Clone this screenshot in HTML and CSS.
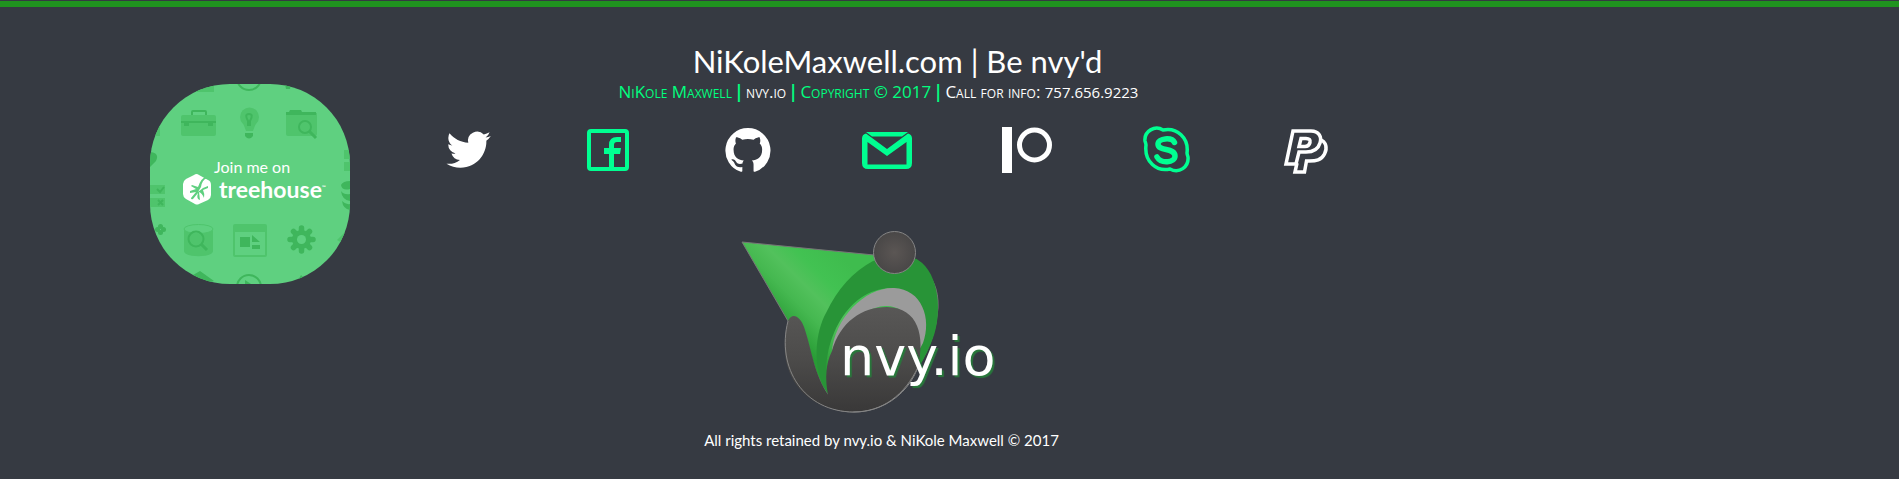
FILE: index.html
```html
<!DOCTYPE html>
<html lang="en">
<head>
<meta charset="utf-8">
<title>NiKoleMaxwell.com</title>
<link rel="stylesheet" href="styles.css">
</head>
<body>
<footer class="footer">
  <a class="badge" href="#" aria-label="Join me on treehouse">
    <svg class="badge-art" viewBox="0 0 200 200" aria-hidden="true">
      <g fill="#4fc46c">
        <rect x="31" y="31" width="35" height="21" rx="2"/>
        <circle cx="99.500" cy="33" r="9.500"/><path d="M93 39h13l-3 8h-7z"/>
        <path d="M136 29h31v21a2 2 0 0 1-2 2h-27a2 2 0 0 1-2-2z"/>
        <path d="M34 145v22c0 7 29 7 29 0v-22z"/>
        <path fill-rule="evenodd" d="M85 140h30a2 2 0 0 1 2 2v29a2 2 0 0 1-2 2H85a2 2 0 0 1-2-2v-29a2 2 0 0 1 2-2zm0 8v23h30v-23z"/>
        <path d="M0 101h15v9H0zM0 114h15v9H0zM194 66h6v9h-6zM194 78h6v9h-6zM187 156l8-8 5 3v13zM46 2h18v6H46zM0 42h10v10H0z"/>
      </g>
      <ellipse cx="48.500" cy="145" rx="14.500" ry="4.500" fill="#5fd080" stroke="#4fc46c"/>
      <g fill="none" stroke="#3fb65c" stroke-width="2">
        <path d="M42 31v-3q0-1 1-1h12q1 0 1 1v3M31 38h35"/>
        <path d="M98 42v-5q-4-7 1-7t1 7v5"/>
        <circle cx="155" cy="43" r="6"/><path d="M159 47l7 7" stroke-width="3"/>
        <circle cx="46" cy="155" r="7.500"/><path d="M51 160l6 6" stroke-width="3"/>
        <circle cx="99" cy="203" r="12"/><circle cx="99" cy="-6" r="12"/>
        <path d="M7 105l3 3 4-5M8 116l5 5m0-5l-5 5"/>
      </g>
      <g fill="#3fb65c">
        <path d="M34 37h5v5h-5zM58 37h5v5h-5zM95 49h8v3q-4 5-8 0zM136 31v-3h3l1-2h11l1 2h14v3z"/>
        <path d="M90 153h10v10H90zM102 151l8 7h-8zM102 161h8v4h-8z"/>
        <path d="M43 191l7-4 14 10-10 3zM95 196l9 6H95zM0 68q10 1 6 9l-6 6zM147 198l4-7 4 4-1 5zM135 0h6l-1 5h-4z"/>
        <circle cx="10.500" cy="142.500" r="2.500"/><circle cx="10.500" cy="148.500" r="2.500"/><circle cx="7.500" cy="145.500" r="2.500"/><circle cx="13.500" cy="145.500" r="2.500"/>
        <path d="M191 101q2-4 9-4v8q-8 2-9-4zM191 107q3 4 9 3v7q-8-1-9-10zM192 117q4 4 8 3v6q-7-1-8-9z"/>
      </g>
      <g transform="translate(151.500 155.500)">
        <g stroke="#3fb65c" stroke-width="5.500" stroke-linecap="round">
          <path d="M0-11.500V11.500M-11.500 0H11.500M-8-8L8 8M-8 8L8-8"/>
        </g>
        <circle r="9.500" fill="#3fb65c"/><circle r="4.500" fill="#5fd080"/>
      </g>
      <path d="M44 91q2.500-2 5 0l9 5q3 1 3 5v10q0 3-3 5l-9 4q-2 1-4 0l-9-5q-3-2-3-5v-10q0-3 3-5z" fill="#fff"/>
      <path d="M57 94q-5 2-6 9l-3 5 5-4 5-2v2l-5 2q2 4 1 8-2-5-5-6l1 8q-4-1-2-7l-5 6q-2 1-2-1l5-6-6 1v-2l6-2-5-3 1-1 6 2q3-9 9-11z" fill="#5fd080"/>
    </svg>
    <span class="badge-join">Join me on</span>
    <span class="badge-name">treehouse<sup class="badge-tm">™</sup></span>
  </a>

  <div class="main">
    <h1 class="title">NiKoleMaxwell.com | Be nvy'd</h1>
    <p class="info">NiKole Maxwell <b>|</b> <a href="#">nvy.io</a> <b>|</b> Copyright © 2017 <b>|</b> <a href="#">Call for info: <span class="phone">757.656.9223</span></a></p>

    <nav class="social" aria-label="Social links">
      <a href="#" aria-label="Twitter"><svg viewBox="0 0 50 50"><path fill="#fff" transform="translate(2.500 2.500) scale(1.850)" d="M23.950 4.570a10 10 0 0 1-2.820.77 4.960 4.960 0 0 0 2.160-2.720c-.95.550-2 .95-3.130 1.180a4.920 4.920 0 0 0-8.380 4.480C7.690 8.090 4.070 6.130 1.640 3.160a4.800 4.800 0 0 0-.67 2.480c0 1.710.87 3.210 2.190 4.100a4.900 4.900 0 0 1-2.230-.62v.06a4.920 4.920 0 0 0 3.950 4.830 5 5 0 0 1-2.210.08 4.940 4.940 0 0 0 4.600 3.420A9.870 9.870 0 0 1 0 19.540a14 14 0 0 0 7.550 2.210c9.050 0 14-7.500 14-13.980 0-.21 0-.42-.02-.63a9.940 9.940 0 0 0 2.420-2.570z"/></svg></a>
      <a href="#" aria-label="Facebook"><svg viewBox="0 0 50 50"><rect x="6" y="6" width="38" height="38" rx="2" fill="none" stroke="#00ff91" stroke-width="4"/><path fill="#00ff91" d="M26 43V29h-5v-6h5v-3q0-8 8-8h4v5h-4q-3 0-3 3v3h7l-1 6h-6v14z"/></svg></a>
      <a href="#" aria-label="GitHub"><svg viewBox="0 0 50 50"><path fill="#fff" transform="translate(2.500 2.500) scale(1.870)" d="M12 .3a12 12 0 0 0-3.800 23.400c.6.100.8-.3.800-.6v-2c-3.300.7-4-1.600-4-1.600-.6-1.400-1.400-1.800-1.400-1.800-1-.7.100-.7.100-.7 1.200 0 1.900 1.200 1.900 1.200 1 1.800 2.800 1.300 3.500 1 0-.8.400-1.300.7-1.600-2.700-.3-5.500-1.300-5.500-6 0-1.200.5-2.300 1.300-3.100-.2-.4-.6-1.600 0-3.200 0 0 1-.3 3.400 1.200a11.500 11.500 0 0 1 6 0c2.300-1.500 3.300-1.200 3.300-1.200.6 1.600.2 2.800 0 3.200.9.800 1.300 1.900 1.300 3.200 0 4.600-2.800 5.600-5.500 5.900.5.400.9 1 .9 2.200v3.300c0 .3.100.7.800.6A12 12 0 0 0 12 .3"/></svg></a>
      <a href="#" aria-label="Email"><svg viewBox="0 0 50 50"><path fill="#00ff91" fill-rule="evenodd" d="M4 8.500L25 24 46 8.500q4 1 4 5V38q0 6-6 6H6q-6 0-6-6V13.500q0-4 4-5zM5.500 17v22.500h39V17L25 31z"/><path fill="#00ff91" d="M4 7h42l-6 4.500H10z"/></svg></a>
      <a href="#" aria-label="Patreon"><svg viewBox="0 0 50 50"><path fill="#fff" d="M0 2h10v46H0z"/><circle cx="32.500" cy="20" r="15" fill="none" stroke="#fff" stroke-width="5"/></svg></a>
      <a href="#" aria-label="Skype"><svg viewBox="0 0 50 50"><g fill="none" stroke="#00ff91"><path stroke-width="3.500" d="M21 5C13 0 2 6 3 16q1 3 1 4C2 37 15 47 28 44c9 5 19-2 18-12q-1-3-1-4C47 13 35 2 21 5z"/><path stroke-width="5.500" stroke-linecap="round" d="M32.500 17.500C30 12 16 13 16 19c0 8 17 3 17 12 0 7-14 8-18 1"/></g></svg></a>
      <a href="#" aria-label="PayPal"><svg viewBox="0 0 50 50"><g fill="none" stroke="#fff" stroke-width="3.500"><path d="M12 6h18c8 0 11 6 9 12-2 7-8 9-14 9h-7l-3 12H5z"/><path d="M20 13.500h5q5 0 4 4-1 4-5 4h-6z"/><path d="M38.500 14c7 3 8 9 5 15-3 6-8 7.500-18 7l-2 11H14l2-9"/></g></svg></a>
    </nav>

    <a class="logo" href="#" aria-label="nvy.io">
      <svg viewBox="0 0 280 200">
        <defs>
          <linearGradient id="cone" gradientUnits="userSpaceOnUse" x1="40" y1="95" x2="105" y2="30"><stop offset="0" stop-color="#289c35"/><stop offset=".3" stop-color="#45b850"/><stop offset=".5" stop-color="#52c15c"/><stop offset=".7" stop-color="#42c252"/><stop offset="1" stop-color="#3fbc4e"/></linearGradient>
          <linearGradient id="ball" gradientUnits="userSpaceOnUse" x1="0" y1="80" x2="0" y2="192"><stop offset="0" stop-color="#5a5958"/><stop offset=".5" stop-color="#4d4c4b"/><stop offset="1" stop-color="#393838"/></linearGradient>
          <radialGradient id="head"><stop offset="0" stop-color="#5b5654"/><stop offset="1" stop-color="#494747"/></radialGradient>
        </defs>
        <circle cx="124" cy="124" r="68" fill="url(#ball)" stroke="#888"/>
        <path d="M12 22L144 35C180 32 210 50 208 88q-2 31-20 59L100 150 98 175Q86 160 76 116L58 101z" fill="url(#cone)" stroke="#777"/>
        <path d="M143 41C164 35 184 36 188 40c22 13 24 56 15 78q-5 14-14 29l-5-20q4-57-22-59C115 68 87 128 99 175 80 148 86 111 96 93q17-36 47-52z" fill="#289437"/>
        <path d="M102 131C105 98 135 67 164 68c28 1 38 31 29 55L181 145c9-35-2-60-26-59-25 2-46 25-53 45z" fill="#9b9b9b"/>
        <path d="M102 131c8-29 30-44 55-44 32 1 38 29 31 61-12 25-35 43-64 43l-26-16q-5-26 4-44z" fill="url(#ball)"/>
        <path d="M58 101c4-9 12-5 16 6 8 23 10 48 25 69l25 16c-58-2-78-47-66-91z" fill="url(#ball)"/>
        <path d="M58 101c-12 47 16 91 66 91 28 0 51-17 64-45" fill="none" stroke="#858585"/>
        <circle cx="164.500" cy="32.500" r="21" fill="url(#head)" stroke="#858585"/>
        <text class="logo-text" x="110" y="155">nvy.io</text>
      </svg>
    </a>
    <p class="rights">All rights retained by nvy.io &amp; NiKole Maxwell © 2017</p>
  </div>
</footer>
</body>
</html>
```
FILE: styles.css
```css
* { box-sizing: border-box; }
body { margin: 0; padding-top: 1px; background: #363a42; color: #fff; font-family: "Open Sans", "Noto Sans", sans-serif; }
.footer {
  display: grid;
  grid-template-columns: 200px minmax(0, 977fr) 474fr;
  column-gap: 49px;
  padding-left: 150px;
  border-top: 6px solid #20931f;
  background: #363a42;
}
.badge {
  position: relative;
  display: flex;
  flex-direction: column;
  width: 200px;
  height: 200px;
  margin-top: 77px;
  padding: 74px 0 0 64px;
  overflow: hidden;
  border-radius: 80px;
  background: #5fd080;
  color: #fff;
  font-family: Lato, sans-serif;
  text-decoration: none;
  white-space: nowrap;
}
.badge-art { position: absolute; inset: 0; width: 100%; height: 100%; }
.badge-join { position: relative; font-size: 16px; line-height: 18px; }
.badge-name { position: relative; padding-left: 5px; font-size: 23px; font-weight: 700; line-height: 26px; }
.badge-tm { font-size: 5px; line-height: 5px; vertical-align: 9px; }
.main { display: flex; flex-direction: column; }
.title { margin: 36px 0 0; padding-left: 20px; font: 400 31px/36px Lato, sans-serif; text-align: center; }
.info { margin: 0; padding-right: 18px; color: #00ff7f; font-size: 17px; line-height: 26px; font-variant: small-caps; text-align: center; }
.info b { margin: 0 -2px; }
.info a { color: #fff; text-decoration: none; }
.phone { font-size: 15px; }
.social { display: grid; grid-template-columns: repeat(7, 1fr); margin-top: 20px; }
.social a { display: flex; justify-content: center; }
.social svg { width: 50px; height: 50px; }
.logo { align-self: center; margin-top: 45px; padding-right: 36px; }
.logo svg { display: block; width: 280px; height: 200px; }
.logo-text { fill: #fff; font: 400 54px "DejaVu Sans", sans-serif; text-shadow: 2px 2px 1px #28783b; }
.rights { margin: 8px 0 24px; padding-right: 12px; font: 400 15px/24px Lato, sans-serif; text-align: center; }
```
